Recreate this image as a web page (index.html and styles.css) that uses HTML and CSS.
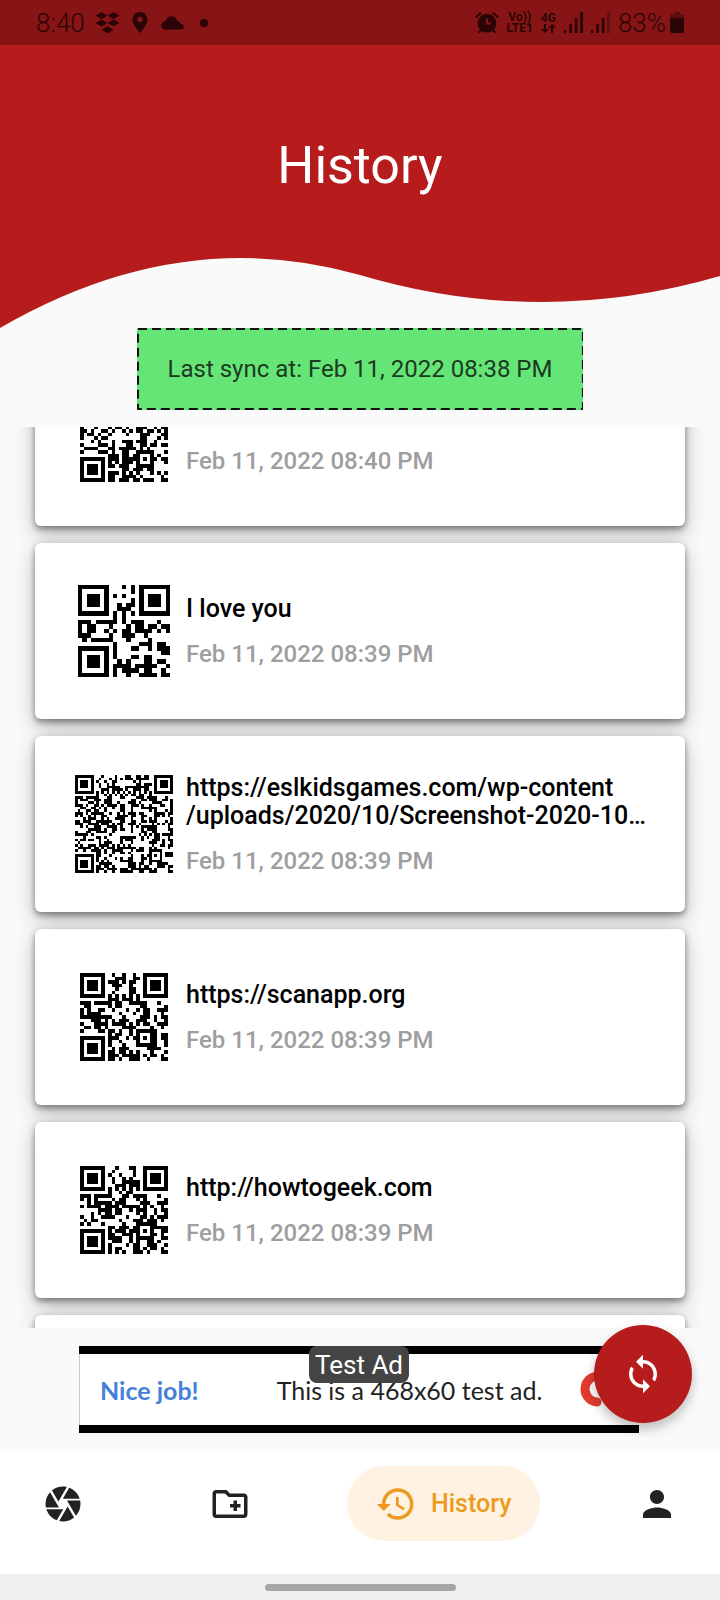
FILE: index.html
```html
<!DOCTYPE html>
<html lang="en">
<head>
<meta charset="utf-8">
<meta name="viewport" content="width=device-width, initial-scale=1">
<title>History</title>
<link rel="stylesheet" href="styles.css">
</head>
<body>
<div class="app">
  <header class="header">
    <div class="status">
      <div class="status-group">
        <span class="status-text">8:40</span>
        <svg class="status-icon" width="25" height="22" viewBox="0 0 25 22"><path d="M6.500 0l6 3.600-6 3.600-6-3.600zM18.500 0l6 3.600-6 3.600-6-3.600zM6.500 7.400l6 3.600-6 3.600-6-3.600zM18.500 7.400l6 3.600-6 3.600-6-3.600zM12.500 14.200l6 3.600-6 3.800-6-3.800z"/></svg>
        <svg class="status-icon pin" width="16" height="21" viewBox="0 0 16 21"><path fill-rule="evenodd" d="M8 0C3.600 0 .5 3.300.5 7.500.5 13 8 21 8 21s7.500-8 7.500-13.500C15.500 3.300 12.400 0 8 0zm0 10a2.600 2.600 0 1 1 0-5.200A2.600 2.600 0 0 1 8 10z"/></svg>
        <svg class="status-icon cloud" width="24" height="14" viewBox="0 0 24 14"><path d="M4 13.500a4 4 0 0 1-.5-7.500C4 5 5 4.500 6 4.500 7 1.500 9 .3 11.500.3c3 0 5 1.700 5.700 4.700 2 0 3.300 1 3.700 2.700 1.800.4 2.800 1.500 2.800 3 0 1.700-1.200 2.800-3 2.800z"/></svg>
        <svg class="status-icon" width="8" height="8" viewBox="0 0 8 8"><circle cx="4" cy="4" r="4"/></svg>
      </div>
      <div class="status-group status-right">
        <svg class="status-icon" width="24" height="22" viewBox="0 0 24 22"><path fill-rule="evenodd" d="M12 2a9.300 9.300 0 0 1 7 15.400l2 2.600-1.500 1.300-2.400-2.400a9.300 9.300 0 0 1-10.200 0l-2.400 2.400L3 20l2-2.600A9.300 9.300 0 0 1 12 2zm-1 4.500v6h5v-2h-3v-4z"/><path d="M.8 5.500L6 .8M18 .8l5.200 4.700" fill="none" stroke="#2b0505" stroke-width="2.200"/></svg>
        <span class="status-tiny"><span>Vo))</span><span>LTE1</span></span>
        <span class="status-tiny"><span>4G</span><svg width="15" height="9" viewBox="0 0 15 9"><path d="M3 0h2v5h3L4 9 0 5h3zM10 9h2V4h3l-4-4-4 4h3z"/></svg></span>
        <svg class="status-icon" width="19" height="21" viewBox="0 0 19 21"><path d="M0 18h2v3H0zM5.300 12h2.700v9H5.300zM10.800 6h2.700v15h-2.700zM16.200 0H19v21h-2.800z"/></svg>
        <svg class="status-icon" width="19" height="21" viewBox="0 0 19 21"><path d="M0 18h2v3H0zM5.300 12h2.700v9H5.300zM10.800 6h2.700v15h-2.700z"/><path opacity=".4" d="M16.200 0H19v21h-2.800z"/></svg>
        <span class="status-text battery">83%<svg width="14" height="21" viewBox="0 0 14 21"><path opacity=".5" d="M4 0h6v2.500h4V6H0V2.500h4z"/><path d="M0 6h14v13q0 2-2 2H2q-2 0-2-2z"/></svg></span>
      </div>
    </div>
    <h1 class="title">History</h1>
    <svg class="wave" viewBox="0 0 720 75" preserveAspectRatio="none" aria-hidden="true"><path d="M0 0V75Q180 -29.500 360 22Q540 75.500 720 23V0Z"/></svg>
  </header>

  <p class="sync"><svg class="sync-border" aria-hidden="true"><rect x="1" y="1"/></svg>Last sync at: Feb 11, 2022 08:38 PM</p>

  <ul class="history">
    <li class="card">
      <div class="code"><svg class="qr qr-small" data-code="QR Code and Barcode Scanner"></svg></div>
      <div class="info"><h2 class="name">QR Code and Barcode Scanner</h2><p class="date">Feb 11, 2022 08:40 PM</p></div>
    </li>
    <li class="card">
      <div class="code"><svg class="qr qr-medium" data-code="I love you"></svg></div>
      <div class="info"><h2 class="name">I love you</h2><p class="date">Feb 11, 2022 08:39 PM</p></div>
    </li>
    <li class="card">
      <div class="code"><svg class="qr qr-large" data-code="https://eslkidsgames.com/wp-content/uploads/2020/10/Screenshot-2020-10-16-at-11.38.01.png"></svg></div>
      <div class="info"><h2 class="name">https://eslkidsgames.com/wp-content<wbr>/uploads/2020/10/Screenshot-2020-10…</h2><p class="date">Feb 11, 2022 08:39 PM</p></div>
    </li>
    <li class="card">
      <div class="code"><svg class="qr qr-small" data-code="https://scanapp.org"></svg></div>
      <div class="info"><h2 class="name">https://scanapp.org</h2><p class="date">Feb 11, 2022 08:39 PM</p></div>
    </li>
    <li class="card">
      <div class="code"><svg class="qr qr-small" data-code="http://howtogeek.com"></svg></div>
      <div class="info"><h2 class="name">http://howtogeek.com</h2><p class="date">Feb 11, 2022 08:39 PM</p></div>
    </li>
    <li class="card"></li>
  </ul>

  <div class="ad-area">
    <div class="ad">
      <span class="ad-badge">Test Ad</span>
      <span class="ad-praise">Nice job!</span>
      <span class="ad-text">This is a 468x60 test ad.</span>
      <svg class="ad-logo" width="40" height="40" viewBox="0 0 40 40" aria-hidden="true"><path d="M29 8.500A13 13 0 1 0 22 33" fill="none" stroke="#e23b30" stroke-width="9" stroke-linecap="round"/></svg>
    </div>
    <button class="fab" type="button" aria-label="Sync"><svg class="icon" viewBox="0 0 24 24"><path d="M12 4V1L8 5l4 4V6c3.310 0 6 2.690 6 6 0 1.010-.25 1.970-.7 2.800l1.460 1.460C19.540 15.030 20 13.570 20 12c0-4.420-3.580-8-8-8zm0 14c-3.310 0-6-2.690-6-6 0-1.010.25-1.970.7-2.800L5.240 7.740C4.460 8.970 4 10.430 4 12c0 4.420 3.580 8 8 8v3l4-4-4-4v3z"/></svg></button>
  </div>

  <nav class="nav">
    <button class="tab" type="button" aria-label="Scan"><svg class="icon" viewBox="0 0 24 24"><path d="M9.400 10.500l4.770-8.260C13.470 2.090 12.750 2 12 2c-2.400 0-4.600.85-6.320 2.250l3.660 6.350.06-.1zM21.540 9c-.92-2.920-3.150-5.260-6-6.340L11.880 9h9.660zm.26 1h-7.490l.29.5 4.760 8.250C21 16.970 22 14.610 22 12c0-.69-.07-1.350-.2-2zM8.540 12l-3.900-6.750C3.010 7.030 2 9.390 2 12c0 .69.07 1.350.2 2h7.490l-1.150-2zm-6.080 3c.92 2.920 3.150 5.260 6 6.340L12.120 15H2.460zm11.270 0l-3.900 6.760c.7.15 1.420.24 2.170.24 2.400 0 4.600-.85 6.320-2.250l-3.660-6.350-.93 1.600z"/></svg></button>
    <button class="tab" type="button" aria-label="Create"><svg class="icon" viewBox="0 0 24 24"><path d="M20 6h-8l-2-2H4c-1.110 0-1.990.89-1.990 2L2 18c0 1.110.89 2 2 2h16c1.110 0 2-.89 2-2V8c0-1.110-.89-2-2-2zm0 12H4V6h5.170l2 2H20v10zm-8-4h2v2h2v-2h2v-2h-2v-2h-2v2h-2v2z"/></svg></button>
    <button class="tab tab-active" type="button" aria-current="page"><svg class="icon" viewBox="0 0 24 24"><path d="M13 3c-4.970 0-9 4.030-9 9H1l3.890 3.890.07.14L9 12H6c0-3.870 3.130-7 7-7s7 3.130 7 7-3.130 7-7 7c-1.930 0-3.680-.79-4.940-2.060l-1.420 1.420C8.270 19.990 10.510 21 13 21c4.970 0 9-4.030 9-9s-4.030-9-9-9zm-1 5v5l4.280 2.540.72-1.210-3.500-2.080V8H12z"/></svg>History</button>
    <button class="tab" type="button" aria-label="Profile"><svg class="icon" viewBox="0 0 24 24"><path d="M12 12c2.210 0 4-1.790 4-4s-1.790-4-4-4-4 1.790-4 4 1.790 4 4 4zm0 2c-2.670 0-8 1.340-8 4v2h16v-2c0-2.660-5.330-4-8-4z"/></svg></button>
  </nav>
  <div class="gesture"><div class="gesture-bar"></div></div>
</div>
<script src="app.js"></script>
</body>
</html>
```

FILE: styles.css
```css
* { box-sizing: border-box; }

body {
  margin: 0;
  background: #fafafa;
  color: #000;
  font-family: Roboto, "Liberation Sans", sans-serif;
}

h1, h2, p, ul { margin: 0; padding: 0; }
button { border: 0; padding: 0; font: inherit; cursor: pointer; }

.app {
  display: flex;
  flex-direction: column;
  height: 100vh;
  overflow: hidden;
}

.icon { width: 42px; height: 42px; fill: currentColor; }

/* Header */
.status {
  display: flex;
  justify-content: space-between;
  align-items: center;
  height: 45px;
  padding: 0 36px;
  background: #881515;
  color: #2b0505;
}
.status svg { fill: #2b0505; flex: none; }
.status-group { display: flex; align-items: center; gap: 10px; }
.status-right { gap: 8px; }
.status-text { font-size: 26px; font-weight: 300; line-height: 28px; }
.status-icon { display: block; }
.pin { margin-left: 2px; }
.cloud { margin: 0 6px 0 2px; }
.status-tiny {
  display: flex;
  flex-direction: column;
  align-items: center;
  font-size: 12px;
  font-weight: 700;
  line-height: 11px;
}
.battery { display: flex; align-items: center; gap: 4px; }

.title {
  padding: 91px 0 57px;
  background: #b71c1c;
  color: #fff;
  font-size: 52px;
  font-weight: 400;
  line-height: 60px;
  text-align: center;
}
.wave { display: block; width: 100%; height: 75px; fill: #b71c1c; }

/* Sync banner */
.sync {
  position: relative;
  align-self: center;
  flex: none;
  margin-bottom: 17px;
  padding: 27px 31px;
  background: #66e577;
  color: #1c3a1f;
  font-size: 24px;
  line-height: 28px;
}
.sync-border {
  position: absolute;
  inset: 0;
  width: 100%;
  height: 100%;
}
.sync-border rect {
  width: calc(100% - 2px);
  height: calc(100% - 2px);
  fill: none;
  stroke: #111;
  stroke-width: 2px;
  stroke-dasharray: 9 5;
}

/* History list */
.history {
  flex: 1;
  min-height: 0;
  padding: 8px 35px;
  overflow-y: auto;
  scrollbar-width: none;
  list-style: none;
}
.card {
  display: flex;
  align-items: center;
  gap: 12px;
  height: 176px;
  margin-bottom: 17px;
  padding: 0 39px;
  border-radius: 6px;
  background: #fff;
  box-shadow: 0 3px 6px rgba(0, 0, 0, 0.42), 0 8px 22px rgba(0, 0, 0, 0.25);
}
.code { display: grid; place-items: center; flex: none; width: 100px; }
.qr { display: block; }
.qr-small { width: 88px; height: 88px; }
.qr-medium { width: 92px; height: 92px; }
.qr-large { width: 98px; height: 98px; }
.info { display: grid; gap: 17px; min-width: 0; }
.name { font-size: 25px; font-weight: 500; line-height: 28px; white-space: nowrap; }
.date { color: #9e9e9e; font-size: 24px; font-weight: 500; line-height: 28px; }

/* Ad banner */
.ad-area { position: relative; flex: none; padding: 18px 79px 19px; }
.ad {
  position: relative;
  display: flex;
  align-items: center;
  height: 87px;
  max-width: 560px;
  padding-left: 21px;
  border: solid #000;
  border-width: 8px 0;
  background: #fff;
  box-shadow: inset 1px 0 #ccc;
  font-family: Lato, sans-serif;
  font-size: 25px;
  line-height: 28px;
}
.ad-badge {
  position: absolute;
  top: -8px;
  left: 50%;
  transform: translateX(-50%);
  padding: 4px 6px 3px;
  border-radius: 8px;
  background: #444;
  color: #fff;
  font-family: Roboto, sans-serif;
  font-size: 26px;
  line-height: 30px;
}
.ad-praise { color: #4680d9; font-weight: 700; }
.ad-text { margin-left: 78px; color: #222; }
.ad-logo { position: absolute; right: 24px; top: 15px; }
.fab {
  position: absolute;
  top: -3px;
  right: 28px;
  display: grid;
  place-items: center;
  width: 98px;
  height: 98px;
  border-radius: 50%;
  background: #b71c1c;
  color: #fff;
  box-shadow: 0 6px 12px rgba(0, 0, 0, 0.25);
}

/* Bottom navigation */
.nav {
  display: flex;
  justify-content: space-between;
  flex: none;
  padding: 14px 14px 33px;
  background: #fff;
}
.tab {
  display: flex;
  align-items: center;
  gap: 14px;
  height: 75px;
  padding: 0 28px;
  border-radius: 38px;
  background: none;
  color: #222;
}
.tab-active {
  background: #fff2e3;
  color: #ec9a20;
  font-size: 25px;
  font-weight: 500;
}
.gesture { flex: none; height: 26px; padding-top: 10px; background: #f0f0f0; }
.gesture-bar {
  width: 191px;
  height: 7px;
  margin: 0 auto;
  border-radius: 4px;
  background: #a6a6a6;
}
```

FILE: app.js
```js
// QR encoder for byte mode, error correction level L, single-block versions.
const VERSIONS = [
  { size: 21, data: 19, ecc: 7, align: 0 },
  { size: 25, data: 34, ecc: 10, align: 18 },
  { size: 29, data: 55, ecc: 15, align: 22 },
  { size: 33, data: 80, ecc: 20, align: 26 },
  { size: 37, data: 108, ecc: 26, align: 30 }
];

// Mask pattern 0 is used for every code.
const FORMAT = 0b111011111000100;
const masked = (r, c) => (r + c) % 2 === 0;

function multiply(a, b) {
  let z = 0;
  for (let i = 7; i >= 0; i--) {
    z = (z << 1) ^ ((z >> 7) * 0x11d);
    z ^= ((b >> i) & 1) * a;
  }
  return z;
}

function errorCodewords(data, count) {
  const divisor = new Array(count).fill(0);
  divisor[count - 1] = 1;
  let root = 1;
  for (let i = 0; i < count; i++) {
    for (let j = 0; j < count; j++) {
      divisor[j] = multiply(divisor[j], root);
      if (j + 1 < count) divisor[j] ^= divisor[j + 1];
    }
    root = multiply(root, 2);
  }
  const result = new Array(count).fill(0);
  for (const byte of data) {
    const factor = byte ^ result.shift();
    result.push(0);
    divisor.forEach((d, i) => { result[i] ^= multiply(d, factor); });
  }
  return result;
}

function codewords(text, version) {
  const bytes = new TextEncoder().encode(text);
  let bits = "0100" + bytes.length.toString(2).padStart(8, "0");
  for (const b of bytes) bits += b.toString(2).padStart(8, "0");
  bits += "0000";
  const data = [];
  for (let i = 0; i + 8 <= bits.length; i += 8) data.push(parseInt(bits.slice(i, i + 8), 2));
  for (let pad = 0xec; data.length < version.data; pad ^= 0xec ^ 0x11) data.push(pad);
  return data.concat(errorCodewords(data, version.ecc));
}

function encode(text) {
  const version = VERSIONS.find((v) => v.data >= new TextEncoder().encode(text).length + 2);
  const n = version.size;
  const grid = Array.from({ length: n }, () => new Array(n).fill(null));
  const finder = (r0, c0) => {
    for (let r = -4; r <= 4; r++) {
      for (let c = -4; c <= 4; c++) {
        const y = r0 + r, x = c0 + c, d = Math.max(Math.abs(r), Math.abs(c));
        if (y >= 0 && y < n && x >= 0 && x < n) grid[y][x] = d !== 2 && d !== 4;
      }
    }
  };
  finder(3, 3);
  finder(3, n - 4);
  finder(n - 4, 3);
  if (version.align) {
    for (let r = -2; r <= 2; r++) {
      for (let c = -2; c <= 2; c++) {
        grid[version.align + r][version.align + c] = Math.max(Math.abs(r), Math.abs(c)) !== 1;
      }
    }
  }
  for (let i = 8; i < n - 8; i++) grid[6][i] = grid[i][6] = i % 2 === 0;

  for (let i = 0; i < 15; i++) {
    const bit = ((FORMAT >> i) & 1) === 1;
    if (i < 6) grid[i][8] = bit;
    else if (i < 8) grid[i + 1][8] = bit;
    else grid[n - 15 + i][8] = bit;
    if (i < 8) grid[8][n - 1 - i] = bit;
    else if (i < 9) grid[8][7] = bit;
    else grid[8][14 - i] = bit;
  }
  grid[n - 8][8] = true;

  const words = codewords(text, version);
  let k = 0;
  for (let right = n - 1; right >= 1; right -= 2) {
    if (right === 6) right = 5;
    const upward = ((right + 1) & 2) === 0;
    for (let v = 0; v < n; v++) {
      for (let j = 0; j < 2; j++) {
        const c = right - j;
        const r = upward ? n - 1 - v : v;
        if (grid[r][c] !== null) continue;
        const bit = k < words.length * 8 && ((words[k >> 3] >> (7 - (k & 7))) & 1) === 1;
        k++;
        grid[r][c] = bit !== masked(r, c);
      }
    }
  }
  return grid;
}

document.querySelectorAll(".qr").forEach((svg) => {
  const grid = encode(svg.dataset.code);
  let d = "";
  grid.forEach((row, r) => row.forEach((on, c) => { if (on) d += `M${c} ${r}h1v1h-1z`; }));
  svg.setAttribute("viewBox", `0 0 ${grid.length} ${grid.length}`);
  svg.setAttribute("shape-rendering", "crispEdges");
  const path = document.createElementNS("http://www.w3.org/2000/svg", "path");
  path.setAttribute("d", d);
  svg.append(path);
});

// Reopen the list where the newest entry is partly scrolled away.
document.querySelector(".history").scrollTop = 85;
```
